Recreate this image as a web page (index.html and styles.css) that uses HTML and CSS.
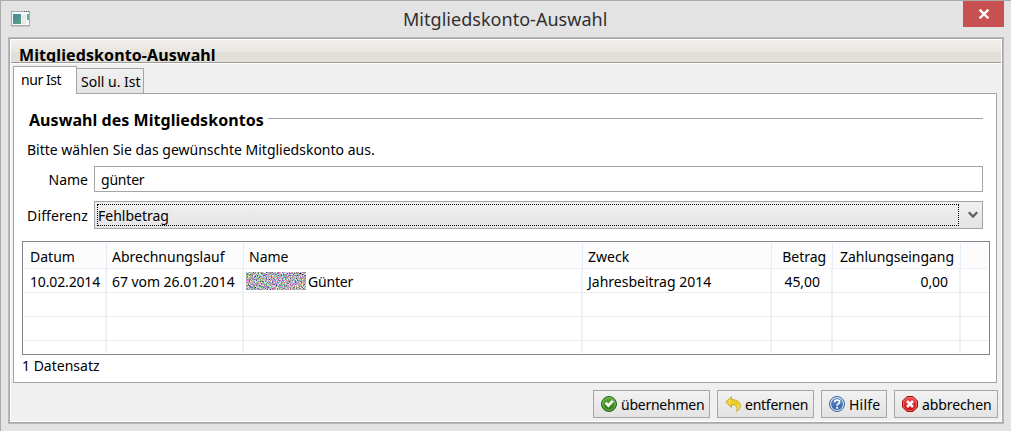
FILE: index.html
```html
<!DOCTYPE html>
<html lang="de">
<head>
<meta charset="utf-8">
<title>Mitgliedskonto-Auswahl</title>
<link rel="stylesheet" href="styles.css">
</head>
<body>
<div class="window">
  <header class="titlebar">
    <svg class="app-icon" width="19" height="16" viewBox="0 0 19 16">
      <defs><linearGradient id="app" x2="1" y2="1"><stop stop-color="#4a83a8"/><stop offset="1" stop-color="#55a878"/></linearGradient></defs>
      <rect x=".5" y=".5" width="18" height="14" fill="#f8f8f8" stroke="#a4abb0"/>
      <path d="M0 15.5h19" stroke="#c8c8c8"/>
      <rect x="2" y="3" width="8" height="10" fill="url(#app)"/>
      <path d="M11 4h4v4h-4zM11 9h4v4h-4z" fill="#e4e6e8"/>
      <path d="M16 3h2v6h-2z" fill="#6fa79a"/>
      <path d="M13 .5h1M15 .5h1M17 .5h1" stroke="#567"/>
    </svg>
    <h1 class="title">Mitgliedskonto-Auswahl</h1>
    <button class="close" aria-label="Schließen">
      <svg width="12" height="10" viewBox="0 0 12 10"><path d="M1.6 .6L10.4 9.400M10.400 .6L1.600 9.400" stroke="#fff" stroke-width="2.300"/></svg>
    </button>
  </header>
  <main class="frame">
    <div class="banner"><span class="banner-text">Mitgliedskonto-Auswahl</span></div>
    <nav class="tabs">
      <div class="tab tab-active"><span>nur Ist</span></div>
      <div class="tab tab-other"><span>Soll u. Ist</span></div>
    </nav>
    <section class="panel">
      <div class="section-head"><h2 class="section-title">Auswahl des Mitgliedskontos</h2><span class="rule"></span></div>
      <p class="hint">Bitte wählen Sie das gewünschte Mitgliedskonto aus.</p>
      <div class="field name-field"><label class="label">Name</label><div class="input">günter</div></div>
      <div class="field diff-field"><label class="label label-diff">Differenz</label>
        <div class="select"><span class="focus">Fehlbetrag</span>
          <svg class="chevron" width="10" height="8" viewBox="0 0 10 8"><path d="M.8 1.200L5 5.600L9.200 1.200" fill="none" stroke="#606060" stroke-width="2.300"/></svg>
        </div>
      </div>
      <div class="table">
        <div class="row head"><span>Datum</span><span>Abrechnungslauf</span><span>Name</span><span>Zweck</span><span class="num">Betrag</span><span class="num">Zahlungseingang</span><span></span></div>
        <div class="row"><span class="date">10.02.2014</span><span class="run">67 vom 26.01.2014</span><span class="person"><svg class="noise" width="60" height="18"><filter id="n" x="0" y="0" width="1" height="1" color-interpolation-filters="sRGB"><feTurbulence type="fractalNoise" baseFrequency=".83" numOctaves="3" seed="4"/><feColorMatrix values="1.600 .3 .3 0 -.42  .3 1.600 .3 0 -.42  .3 .3 1.600 0 -.4  0 0 0 0 1"/></filter><rect width="60" height="18" filter="url(#n)"/></svg><span class="first-name">Günter</span></span><span>Jahresbeitrag 2014</span><span class="num val">45,00</span><span class="num val">0,00</span><span></span></div>
        <div class="row"><span></span><span></span><span></span><span></span><span></span><span></span><span></span></div>
        <div class="row"><span></span><span></span><span></span><span></span><span></span><span></span><span></span></div>
        <div class="row last"><span></span><span></span><span></span><span></span><span></span><span></span><span></span></div>
      </div>
      <p class="count">1 Datensatz</p>
    </section>
    <footer class="actions">
      <button class="btn b-ok"><svg width="16" height="16" viewBox="0 0 16 16"><defs><linearGradient id="ok" x2="0" y2="1"><stop stop-color="#64a83c"/><stop offset="1" stop-color="#287811"/></linearGradient></defs><circle cx="8" cy="8" r="7.500" fill="url(#ok)" stroke="#276b18"/><circle cx="8" cy="8" r="6.200" fill="none" stroke="#8cc66c" stroke-width=".8"/><path d="M3.600 7.600L5.600 5.800L7.300 7.800L10.800 4L12.800 5.600L7.500 11.600Z" fill="#fff"/></svg><span>übernehmen</span></button>
      <button class="btn b-del"><svg width="16" height="16" viewBox="0 0 16 16"><defs><linearGradient id="un" x2="1" y2="1"><stop stop-color="#f5e05a"/><stop offset=".6" stop-color="#eccb1c"/><stop offset="1" stop-color="#f8ec98"/></linearGradient></defs><path d="M.6 6L6.500 .8V3.700C12.300 3.700 15.400 6.200 15.300 9.800C15.300 12.200 14.300 14 11.500 15.300C13.200 11.300 11 8.600 6.500 8.600V11.500Z" fill="url(#un)" stroke="#cda52a"/></svg><span>entfernen</span></button>
      <button class="btn b-help"><svg width="16" height="16" viewBox="0 0 16 16"><defs><linearGradient id="hp" x2="0" y2="1"><stop stop-color="#6b91ca"/><stop offset="1" stop-color="#315fa5"/></linearGradient></defs><circle cx="8" cy="8" r="7.500" fill="#dce7f5" stroke="#365f9c"/><circle cx="8" cy="8" r="6" fill="url(#hp)"/><path d="M5.600 6.300C5.600 3.300 10.600 3.300 10.600 6C10.600 7.900 8.100 7.800 8.100 9.700" fill="none" stroke="#fff" stroke-width="1.700"/><circle cx="8.100" cy="11.800" r="1.100" fill="#fff"/></svg><span>Hilfe</span></button>
      <button class="btn b-cancel"><svg width="16" height="16" viewBox="0 0 16 16"><defs><linearGradient id="no" x2="0" y2="1"><stop stop-color="#ee5454"/><stop offset="1" stop-color="#c60810"/></linearGradient></defs><path d="M5 .5H11L15.500 5V11L11 15.500H5L.5 11V5Z" fill="url(#no)" stroke="#a50b10"/><path d="M5.300 1.500H10.700L14.500 5.300V10.700L10.700 14.500H5.300L1.500 10.700V5.300Z" fill="none" stroke="#f47b7b" stroke-width=".7"/><path d="M5 5L11 11M11 5L5 11" stroke="#fff" stroke-width="2.500"/></svg><span>abbrechen</span></button>
    </footer>
  </main>
</div>
</body>
</html>
```
FILE: styles.css
```css
* { box-sizing: border-box; }
body { margin: 0; font: 14px/20px "Noto Sans", "Open Sans", sans-serif; color: #000; }
h1, h2, p { margin: 0; font-weight: normal; }
span, h1, h2, p, label { white-space: nowrap; }
.window { width: 1011px; height: 431px; background: #e3e3e3; border: 1px solid #aaa; border-width: 1px 0 0 1px; padding-left: 7px; }
.titlebar { height: 36px; display: grid; grid-template-columns: 352px 251px 352px 41px; align-items: start; }
.app-icon { margin: 10px 0 0 3px; }
.title { font-size: 18px; line-height: 36px; color: #303030; letter-spacing: .03px; padding-left: 43px; width: 251px; }
.close { grid-column: 4; width: 41px; height: 26px; border: 0; padding: 0; background: #c75050; display: flex; align-items: center; justify-content: center; }
.frame { width: 996px; height: 387px; background: #f0f0f0; border: 1px solid #b9b9bd; box-shadow: inset 0 0 0 1px #a5a5ab, inset 0 0 0 2px #fff; padding: 2px; }
.banner { height: 23px; background: linear-gradient(#f2efec, #e9e5e1 12px, #e2dfd9 12px); border-bottom: 1px solid #9d9c99; overflow: hidden; padding-left: 8px; }
.banner-text { display: block; font-size: 16px; font-weight: bold; line-height: 22px; padding-top: 4px; letter-spacing: .1px; }
.tabs { height: 31px; padding: 0 0 0 2px; display: flex; align-items: flex-end; border-top: 1px solid #fff; }
.tab { border: 1px solid #a5a5a8; white-space: nowrap; }
.tab-active { width: 64px; height: 28px; background: #fff; border-bottom: 0; padding: 3px 0 0 7px; z-index: 1; letter-spacing: -.45px; }
.tab-other { width: 68px; height: 26px; margin-left: -1px; background: linear-gradient(#f0f0f0, #e5e5e5); padding: 3px 0 0 4px; }
.panel { width: 984px; height: 290px; margin-left: 2px; margin-top: -1px; border: 1px solid #a5a5a8; background: #fff; padding: 14px 6px 0 8px; }
.section-head { display: flex; align-items: center; height: 24px; padding: 0 7px; gap: 4px; }
.section-title { font-size: 16px; font-weight: bold; line-height: 24px; width: 235px; letter-spacing: .05px; }
.rule { flex: 1; height: 1px; background: #a0a0a0; margin-top: -3px; }
.hint { padding-left: 5px; margin-top: 8px; }
.field { display: flex; align-items: center; }
.name-field { margin-top: 6px; height: 26px; }
.diff-field { margin-top: 9px; height: 28px; }
.label { width: 66px; margin-right: 6px; padding-top: 1px; text-align: right; }
.label-diff { letter-spacing: .1px; }
.input { width: 889px; height: 26px; border: 1px solid #a5a5a8; padding: 3px 6px; letter-spacing: -.2px; }
.select { width: 889px; height: 28px; border: 1px solid #a5a5a8; background: linear-gradient(#f0f0f0, #e4e4e4); display: flex; padding: 2px; align-items: center; }
.focus { width: 862px; height: 22px; border: 1px dotted #000; line-height: 21px; }
.chevron { margin-left: 9px; }
.table { width: 968px; height: 114px; margin-top: 12px; border: 1px solid #82878f; padding: 1px; overflow: hidden; }
.row { display: grid; grid-template-columns: 83px 137px 339px 189px 61px 128px 27px; height: 24px; }
.row > span { border-right: 2px solid #ecf1f9; border-bottom: 1px solid #ededed; padding-left: 5px; line-height: 25px; overflow: hidden; }
.row > span:first-child { padding-left: 6px; }
.row > span:last-child { border-right: 0; }
.head { height: 26px; }
.head > span { border-right: 1px solid #e3edf8; border-bottom-color: #eef0f5; background: #fcfcfc; line-height: 28px; }
.row .date { letter-spacing: -.15px; }
.row .run { letter-spacing: -.05px; }
.row .num { text-align: right; padding-right: 6px; padding-left: 0; letter-spacing: -.05px; }
.row .val { padding-right: 11px; }
.row .person { display: flex; align-items: center; padding-left: 2px; gap: 2px; }
.first-name { padding-top: 2px; letter-spacing: -.2px; }
.noise { flex: none; }
.last { height: 12px; }
.last > span { border-bottom: 0; }
.count { margin-top: 1px; }
.actions { display: flex; gap: 7px; justify-content: flex-end; margin-top: 7px; padding-right: 3px; }
.btn { height: 28px; border: 1px solid #a5a5a8; background: linear-gradient(#f2f2f2, #e3e3e3); padding: 0 0 0 7px; display: flex; align-items: center; gap: 4px; font: 14px/24px "Noto Sans", "Open Sans", sans-serif; letter-spacing: -.25px; color: #000; }
.btn span { padding-top: 1px; }
.btn svg { flex: none; }
.b-ok { width: 117px; }
.b-del { width: 97px; }
.b-help { width: 66px; letter-spacing: .2px; }
.b-cancel { width: 104px; letter-spacing: -.1px; }
```
